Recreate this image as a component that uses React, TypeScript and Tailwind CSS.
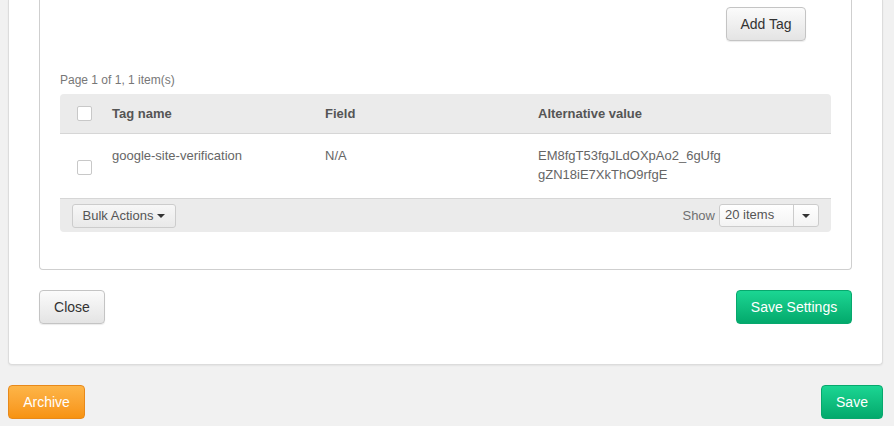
import React from "react";

function Checkbox() {
  return <span className="block w-[15px] h-[15px] bg-white border border-[#c8c8c8] rounded-[2px]" />;
}

function Caret() {
  return (
    <svg width="8" height="4" viewBox="0 0 8 4" className="inline-block">
      <path d="M0 0 L8 0 L4 4 Z" fill="#333" />
    </svg>
  );
}

export default function App() {
  return (
    <div
      className="w-[894px] h-[426px] overflow-hidden bg-[#f1f1f1] flex flex-col pl-[8px] pr-[11px]"
      style={{ fontFamily: '"Liberation Sans", Arial, sans-serif' }}
    >
      {/* main panel */}
      <div className="h-[365px] bg-white border border-t-0 border-[#dcdcdc] rounded-b-[4px] shadow-[0_1px_2px_rgba(0,0,0,0.06)] px-[30px] flex flex-col">
        {/* inner box */}
        <div className="h-[270px] border border-t-0 border-[#cfcfcf] rounded-b-[4px] px-[20px] flex flex-col">
          <div className="flex justify-end pt-[7px] pr-[25px]">
            <button className="w-[80px] h-[34px] rounded-[4px] border border-[#c4c4c4] bg-gradient-to-b from-[#fbfbfb] to-[#e4e4e4] text-[14px] text-[#333] shadow-[0_1px_1px_rgba(0,0,0,0.08)]">
              Add Tag
            </button>
          </div>
          <div className="mt-[32px] text-[12px] text-[#777] leading-[14px]">Page 1 of 1, 1 item(s)</div>
          {/* table */}
          <div className="mt-[7px] rounded-[4px] overflow-hidden">
            <div className="h-[40px] bg-[#ebebeb] border-b border-[#d6d6d6] grid grid-cols-[52px_213px_213px_1fr] items-center text-[13px] font-bold text-[#555]">
              <div className="pl-[17px]"><Checkbox /></div>
              <div>Tag name</div>
              <div>Field</div>
              <div>Alternative value</div>
            </div>
            <div className="h-[65px] bg-white border-b border-[#d6d6d6] grid grid-cols-[52px_213px_213px_1fr] text-[13px] text-[#666] leading-[19px]">
              <div className="pl-[17px] flex items-center pt-[2px]"><Checkbox /></div>
              <div className="pt-[12px]">google-site-verification</div>
              <div className="pt-[12px]">N/A</div>
              <div className="pt-[12px]">EM8fgT53fgJLdOXpAo2_6gUfg<br />gZN18iE7XkThO9rfgE</div>
            </div>
            <div className="h-[33px] bg-[#ebebeb] flex items-center justify-between pl-[12px] pr-[12px]">
              <button className="h-[24px] w-[104px] rounded-[3px] border border-[#cccccc] bg-gradient-to-b from-[#f7f7f7] to-[#e9e9e9] text-[13px] text-[#555] flex items-center justify-center gap-[4px]">
                Bulk Actions <Caret />
              </button>
              <div className="flex items-center gap-[4px] text-[13px] text-[#707070]">
                <span>Show</span>
                <div className="w-[100px] h-[23px] rounded-[3px] border border-[#cccccc] bg-gradient-to-b from-white to-[#f3f3f3] flex text-[#555]">
                  <div className="flex-1 pl-[5px] flex items-center leading-none -mt-[2px]">20 items</div>
                  <div className="w-[25px] border-l border-[#cccccc] flex items-center justify-center pt-[1px]"><Caret /></div>
                </div>
              </div>
            </div>
          </div>
        </div>
        {/* actions */}
        <div className="mt-[20px] flex justify-between">
          <button className="w-[66px] h-[34px] rounded-[4px] border border-[#c4c4c4] bg-gradient-to-b from-[#fbfbfb] to-[#e4e4e4] text-[14px] text-[#333] shadow-[0_1px_1px_rgba(0,0,0,0.08)]">
            Close
          </button>
          <button className="w-[116px] h-[34px] rounded-[4px] border border-[#07a86d] bg-gradient-to-b from-[#1bd693] to-[#03a96c] text-[14px] text-white">
            Save Settings
          </button>
        </div>
      </div>
      {/* bottom */}
      <div className="mt-[20px] flex justify-between">
        <button className="w-[77px] h-[34px] rounded-[4px] border border-[#e8891a] bg-gradient-to-b from-[#fdb547] to-[#f7930f] text-[14px] text-white">
          Archive
        </button>
        <button className="w-[62px] h-[34px] rounded-[4px] border border-[#07a86d] bg-gradient-to-b from-[#1bd693] to-[#03a96c] text-[14px] text-white">
          Save
        </button>
      </div>
    </div>
  );
}
